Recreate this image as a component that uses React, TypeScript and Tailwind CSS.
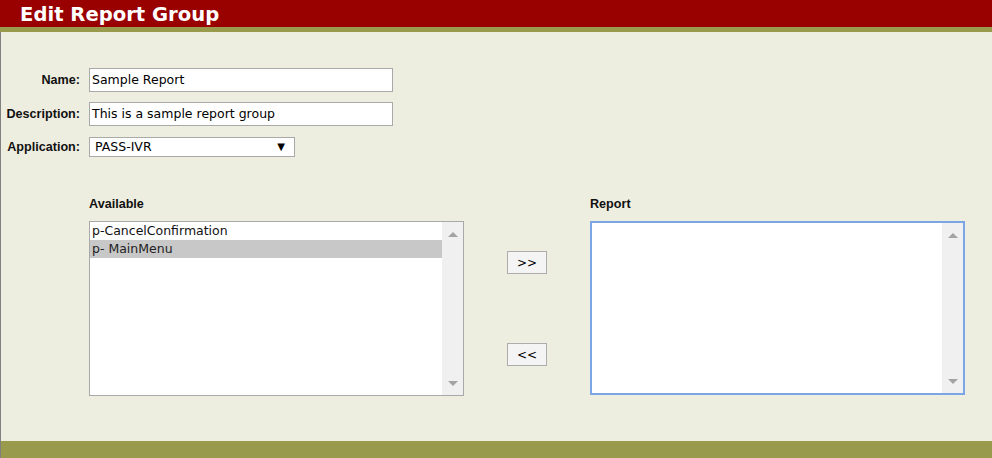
import React from "react";

const verd = { fontFamily: '"DejaVu Sans", Verdana, sans-serif' };
const arial = { fontFamily: '"Liberation Sans", Arial, sans-serif' };

function Scroll() {
  return (
    <div className="w-[21px] h-full bg-[#f0f0f0] flex flex-col items-center justify-between pt-[10px] pb-[9px]">
      <div className="w-0 h-0 border-l-[5px] border-r-[5px] border-b-[5px] border-l-transparent border-r-transparent border-b-[#a3a3a3]" />
      <div className="w-0 h-0 border-l-[5px] border-r-[5px] border-t-[5px] border-l-transparent border-r-transparent border-t-[#a3a3a3]" />
    </div>
  );
}

function Btn({ label }: { label: string }) {
  return (
    <div
      className="w-[40px] h-[23px] border border-[#adadad] bg-[#f4f4f4] flex items-center justify-center text-[12px] text-black"
      style={verd}
    >
      {label}
    </div>
  );
}

export default function App() {
  return (
    <div className="w-[992px] h-[458px] flex flex-col bg-[#eeeee0] overflow-hidden">
      <div
        className="h-[27px] bg-[#990000] pl-[20px] text-white font-bold text-[19.6px] leading-[30px]"
        style={verd}
      >
        Edit Report Group
      </div>
      <div className="h-[5px] bg-[#999a4b]" />
      <div className="flex-1 border-l border-[#808080] flex flex-col">
        <div className="pt-[36px] grid grid-cols-[79px_auto] gap-x-[9px] items-center w-fit">
          <div className="text-right text-[12.6px] font-bold text-[#111]" style={arial}>Name:</div>
          <div
            className="w-[304px] h-[24px] border border-[#a9a9a9] bg-white pl-[2px] text-[12.5px] leading-[22px] text-black"
            style={verd}
          >
            Sample Report
          </div>
          <div className="text-right text-[12.6px] font-bold text-[#111] mt-[10px]" style={arial}>Description:</div>
          <div
            className="w-[304px] h-[24px] border border-[#a9a9a9] bg-white pl-[2px] text-[12.5px] leading-[22px] text-black mt-[10px]"
            style={verd}
          >
            This is a sample report group
          </div>
          <div className="text-right text-[12.6px] font-bold text-[#111] mt-[11px]" style={arial}>Application:</div>
          <div
            className="w-[206px] h-[20px] border border-[#a9a9a9] bg-white pl-[5px] pr-[9px] text-[12.5px] leading-[18px] text-black mt-[11px] flex justify-between items-center"
            style={verd}
          >
            <span>PASS-IVR</span>
            <span className="text-[10px]">▼</span>
          </div>
        </div>

        <div className="flex pl-[88px] pt-[38px]">
          <div className="flex flex-col w-[375px]">
            <div className="text-[12.6px] font-bold text-[#111] h-[26px]" style={arial}>Available</div>
            <div className="h-[175px] border border-[#a9a9a9] bg-white flex">
              <div className="flex-1 flex flex-col text-[12.5px] text-[#111]" style={verd}>
                <div className="h-[18px] leading-[18px] pl-[2px]">p-CancelConfirmation</div>
                <div className="h-[18px] leading-[18px] pl-[2px] bg-[#c8c8c8] text-[#222]">p- MainMenu</div>
              </div>
              <Scroll />
            </div>
          </div>
          <div className="w-[126px] flex flex-col items-center pt-[56px] gap-[69px]">
            <Btn label=">>" />
            <Btn label="<<" />
          </div>
          <div className="flex flex-col w-[375px]">
            <div className="text-[12.6px] font-bold text-[#111] h-[26px]" style={arial}>Report</div>
            <div className="h-[174px] border-2 border-[#7ca5e6] bg-white flex justify-end">
              <Scroll />
            </div>
          </div>
        </div>
      </div>
      <div className="h-[17px] bg-[#999a4b] border-l border-[#808080]" />
    </div>
  );
}
